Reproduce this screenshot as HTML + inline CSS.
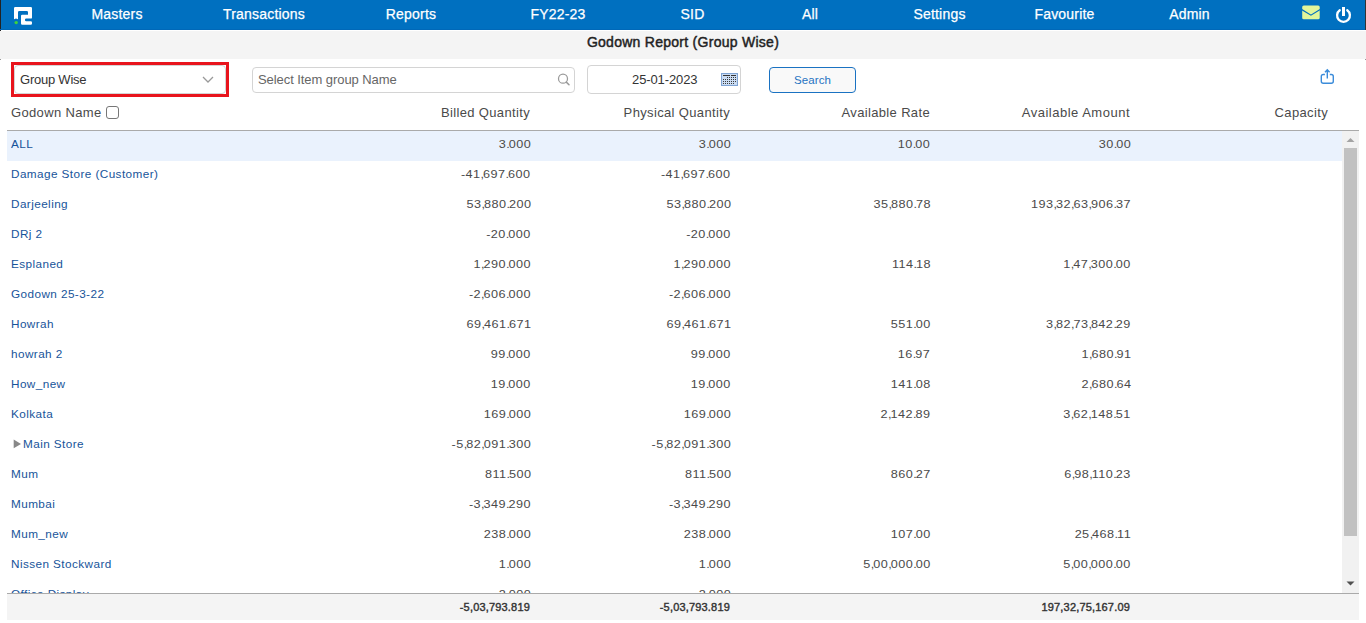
<!DOCTYPE html>
<html><head><meta charset="utf-8">
<style>
*{box-sizing:border-box;margin:0;padding:0}
html,body{width:1366px;height:623px;overflow:hidden;background:#fff;font-family:"Liberation Sans",sans-serif}
.abs{position:absolute}
#nav{position:absolute;left:0;top:0;width:1366px;height:30px;background:#0070c0}
#nav .edge{position:absolute;left:0;top:0;width:1px;height:31px;background:#222}
#nav .it{position:absolute;top:0;height:30px;line-height:29px;color:#fff;font-size:14px;letter-spacing:0.2px;-webkit-text-stroke:0.25px #fff;white-space:nowrap;transform:translateX(-50%)}
#band{position:absolute;left:0;top:31px;width:1366px;height:28px;background:#f4f4f4}
#title{position:absolute;left:0;top:31px;width:1366px;text-align:center;font-size:14px;font-weight:normal;color:#222;line-height:22px;letter-spacing:0.27px;-webkit-text-stroke:0.45px #222}
.inp{position:absolute;border:1px solid #d4d4d4;border-radius:4px;background:#fff}
.ph{position:absolute;font-size:13px;white-space:nowrap}
#red{position:absolute;left:11px;top:62px;width:218px;height:35px;border:3px solid #e8141c}
.hd{position:absolute;top:104px;font-size:13px;color:#4a4a4a;white-space:nowrap;letter-spacing:0.35px;line-height:18px}
.r{text-align:right}
#hline{position:absolute;left:7px;top:130px;width:1352px;height:1px;background:#aaa}
#body{position:absolute;left:7px;top:131px;width:1352px;height:462px;overflow:hidden}
.row{position:absolute;left:0;width:1335px;height:30px}
.row span{position:absolute;top:-2px;line-height:30px;font-size:12px;white-space:nowrap;letter-spacing:0.3px}
.row span.nm{left:4px;color:#17549a;font-size:11.3px;letter-spacing:0.4px;transform:scaleX(1.04);transform-origin:0 50%}
.row span.c1,.row span.c2,.row span.c3,.row span.c4{color:#4a4a4a;text-align:right;font-size:11px;letter-spacing:0.4px;transform:scaleX(1.15);transform-origin:100% 50%}
.row i{font-style:normal;letter-spacing:-0.9px}
.c1{right:811px}.c2{right:611px}.c3{right:411.5px}.c4{right:211px}
#sb{position:absolute;left:1342px;top:131px;width:17px;height:462px;background:#f1f1f1}
#thumb{position:absolute;left:1344px;top:148px;width:13px;height:388px;background:#c1c1c1}
#foot{position:absolute;left:7px;top:593px;width:1352px;height:27px;background:#f4f4f4;border-top:1px solid #aaa}
#foot span{position:absolute;top:0;line-height:26px;font-size:11px;font-weight:normal;color:#333;white-space:nowrap;letter-spacing:0.18px;-webkit-text-stroke:0.4px #333}
</style></head><body>
<div id="nav">
  <div class="edge"></div><div style="position:absolute;left:0;top:29px;width:1366px;height:1px;background:#0068b8"></div><div class="edge" style="left:1365px;height:30px;background:#333"></div>
  <svg class="abs" style="left:13px;top:6px" width="21" height="21" viewBox="13 6 21 21">
    <path fill="#fff" d="M15.2 7 H30.8 Q32 7 32 8.2 V17.4 Q32 18.6 30.8 18.6 H26.2 Q25 18.6 25 19.6 V20.2 Q25 21.2 26.2 21.2 H30.8 Q32 21.2 32 22.4 V23.5 Q32 24.7 30.8 24.7 H22.2 Q21 24.7 21 23.5 V16 Q21 14.8 22.2 14.8 H28 V12.2 Q28 11 26.8 11 H19.2 Q18 11 18 12.2 V19.3 L16 18.5 L14 19.3 V8.2 Q14 7 15.2 7 Z"/>
    <circle cx="16.2" cy="22.6" r="1.7" fill="#3fd43a"/>
  </svg>
  <div class="it" style="left:117px">Masters</div>
  <div class="it" style="left:264px">Transactions</div>
  <div class="it" style="left:411px">Reports</div>
  <div class="it" style="left:558px">FY22-23</div>
  <div class="it" style="left:692.5px">SID</div>
  <div class="it" style="left:810px">All</div>
  <div class="it" style="left:939.5px">Settings</div>
  <div class="it" style="left:1064.5px">Favourite</div>
  <div class="it" style="left:1189.5px">Admin</div>
  <svg class="abs" style="left:1302px;top:5px" width="18" height="15" viewBox="0 0 18 15">
    <rect x="0.2" y="0.5" width="17.5" height="13.8" rx="1.6" fill="#e2f69a"/>
    <path d="M-0.2 4.6 L8.95 10.2 L18.1 4.6" fill="none" stroke="#0070c0" stroke-width="1.15"/>
  </svg>
  <svg class="abs" style="left:1335px;top:6px" width="17" height="18" viewBox="0 0 17 18">
    <path d="M4.74 4.27 A6.40 6.40 0 1 0 12.26 4.27" fill="none" stroke="#fff" stroke-width="2.3" stroke-linecap="round"/>
    <rect x="7" y="1" width="3" height="9" fill="#fff"/>
  </svg>
</div>
<div id="band"></div>
<div class="abs" style="left:0;top:59px;width:1px;height:1px;background:#999"></div><div class="abs" style="left:1365px;top:59px;width:1px;height:1px;background:#999"></div>
<div id="title">Godown Report (Group Wise)</div>

<div id="red"></div>
<div class="inp" style="left:14px;top:65px;width:212px;height:29px"></div>
<div class="ph" style="left:20px;top:72px;color:#333;letter-spacing:-0.23px">Group Wise</div>
<svg class="abs" style="left:202px;top:76px" width="12" height="8" viewBox="0 0 12 8"><path d="M1 1 L6 6 L11 1" fill="none" stroke="#999" stroke-width="1.3"/></svg>

<div class="inp" style="left:252px;top:67px;width:323px;height:26px"></div>
<div class="ph" style="left:258px;top:72px;color:#666;letter-spacing:-0.07px">Select Item group Name</div>
<svg class="abs" style="left:556.5px;top:73.4px" width="14" height="13" viewBox="0 0 14 13"><circle cx="6" cy="5.7" r="4.5" fill="none" stroke="#9a9a9a" stroke-width="1.25"/><path d="M9.3 9.1 L12 11.8" stroke="#9a9a9a" stroke-width="1.5" stroke-linecap="round"/></svg>

<div class="inp" style="left:587px;top:65px;width:154px;height:29px"></div>
<div class="ph" style="left:632px;top:72px;color:#333;letter-spacing:-0.1px">25-01-2023</div>
<svg class="abs" style="left:721px;top:73px" width="17" height="13" viewBox="0 0 17 13" shape-rendering="crispEdges">
  <rect x="0" y="0" width="17" height="13" fill="#7fa3d3"/>
  <rect x="1" y="1" width="15" height="11" fill="#cadcf3"/>
  <rect x="2" y="2" width="7" height="1" fill="#333"/><rect x="10" y="2" width="5" height="1" fill="#333"/>
  <g fill="#3a3a3a"><rect x="6" y="4" width="1" height="1"/><rect x="8" y="4" width="1" height="1"/><rect x="10" y="4" width="1" height="1"/><rect x="12" y="4" width="1" height="1"/><rect x="14" y="4" width="1" height="1"/><rect x="2" y="6" width="1" height="1"/><rect x="4" y="6" width="1" height="1"/><rect x="6" y="6" width="1" height="1"/><rect x="8" y="6" width="1" height="1"/><rect x="10" y="6" width="1" height="1"/><rect x="12" y="6" width="1" height="1"/><rect x="14" y="6" width="1" height="1"/><rect x="2" y="8" width="1" height="1"/><rect x="4" y="8" width="1" height="1"/><rect x="6" y="8" width="1" height="1"/><rect x="8" y="8" width="1" height="1"/><rect x="10" y="8" width="1" height="1"/><rect x="12" y="8" width="1" height="1"/><rect x="14" y="8" width="1" height="1"/><rect x="2" y="10" width="1" height="1"/><rect x="4" y="10" width="1" height="1"/><rect x="6" y="10" width="1" height="1"/><rect x="8" y="10" width="1" height="1"/><rect x="10" y="10" width="1" height="1"/><rect x="12" y="10" width="1" height="1"/></g>
</svg>

<div class="abs" style="left:769px;top:67px;width:87px;height:26px;border:1.5px solid #1a72c2;border-radius:4px;background:#f9f9f9;color:#2673c2;font-size:11.5px;text-align:center;line-height:25px;letter-spacing:0.1px">Search</div>

<svg class="abs" style="left:1320px;top:68px" width="15" height="17" viewBox="0 0 15 17">
  <path d="M4.9 6.5 H3.3 Q1.3 6.5 1.3 8.5 V13.2 Q1.3 15.2 3.3 15.2 H11.3 Q13.3 15.2 13.3 13.2 V8.5 Q13.3 6.5 11.3 6.5 H9.8" fill="none" stroke="#3b8cda" stroke-width="1.4"/>
  <path d="M7.3 10.6 V1.9 M5 4.2 L7.3 1.7 L9.6 4.2" fill="none" stroke="#3b8cda" stroke-width="1.4"/>
</svg>

<div class="hd" style="left:11px">Godown Name</div>
<div class="abs" style="left:106px;top:106px;width:13px;height:13px;border:1px solid #777;border-radius:3px;background:#fff"></div>
<div class="hd r" style="right:836px">Billed Quantity</div>
<div class="hd r" style="right:636px">Physical Quantity</div>
<div class="hd r" style="right:436px">Available Rate</div>
<div class="hd r" style="right:236px;letter-spacing:0.5px">Available Amount</div>
<div class="hd r" style="right:38px">Capacity</div>
<div id="hline"></div>

<div id="body">
<div class="row" style="top:0px;background:#eaf2fd"><span class="nm">ALL</span><span class="c1">3<i>.</i>000</span><span class="c2">3<i>.</i>000</span><span class="c3">10<i>.</i>00</span><span class="c4">30<i>.</i>00</span></div>
<div class="row" style="top:30px"><span class="nm">Damage Store (Customer)</span><span class="c1">-41<i>,</i>697<i>.</i>600</span><span class="c2">-41<i>,</i>697<i>.</i>600</span></div>
<div class="row" style="top:60px"><span class="nm">Darjeeling</span><span class="c1">53<i>,</i>880<i>.</i>200</span><span class="c2">53<i>,</i>880<i>.</i>200</span><span class="c3">35<i>,</i>880<i>.</i>78</span><span class="c4">193<i>,</i>32<i>,</i>63<i>,</i>906<i>.</i>37</span></div>
<div class="row" style="top:90px"><span class="nm">DRj 2</span><span class="c1">-20<i>.</i>000</span><span class="c2">-20<i>.</i>000</span></div>
<div class="row" style="top:120px"><span class="nm">Esplaned</span><span class="c1">1<i>,</i>290<i>.</i>000</span><span class="c2">1<i>,</i>290<i>.</i>000</span><span class="c3">114<i>.</i>18</span><span class="c4">1<i>,</i>47<i>,</i>300<i>.</i>00</span></div>
<div class="row" style="top:150px"><span class="nm">Godown 25-3-22</span><span class="c1">-2<i>,</i>606<i>.</i>000</span><span class="c2">-2<i>,</i>606<i>.</i>000</span></div>
<div class="row" style="top:180px"><span class="nm">Howrah</span><span class="c1">69<i>,</i>461<i>.</i>671</span><span class="c2">69<i>,</i>461<i>.</i>671</span><span class="c3">551<i>.</i>00</span><span class="c4">3<i>,</i>82<i>,</i>73<i>,</i>842<i>.</i>29</span></div>
<div class="row" style="top:210px"><span class="nm">howrah 2</span><span class="c1">99<i>.</i>000</span><span class="c2">99<i>.</i>000</span><span class="c3">16<i>.</i>97</span><span class="c4">1<i>,</i>680<i>.</i>91</span></div>
<div class="row" style="top:240px"><span class="nm">How_new</span><span class="c1">19<i>.</i>000</span><span class="c2">19<i>.</i>000</span><span class="c3">141<i>.</i>08</span><span class="c4">2<i>,</i>680<i>.</i>64</span></div>
<div class="row" style="top:270px"><span class="nm">Kolkata</span><span class="c1">169<i>.</i>000</span><span class="c2">169<i>.</i>000</span><span class="c3">2<i>,</i>142<i>.</i>89</span><span class="c4">3<i>,</i>62<i>,</i>148<i>.</i>51</span></div>
<div class="row" style="top:300px"><span class="nm" style="left:16px">Main Store</span><svg style="position:absolute;left:5.5px;top:7.7px" width="9" height="10" viewBox="0 0 9 10"><path d="M0.7 0.6 L8 4.9 L0.7 9.2 Z" fill="#888"/></svg><span class="c1">-5<i>,</i>82<i>,</i>091<i>.</i>300</span><span class="c2">-5<i>,</i>82<i>,</i>091<i>.</i>300</span></div>
<div class="row" style="top:330px"><span class="nm">Mum</span><span class="c1">811<i>.</i>500</span><span class="c2">811<i>.</i>500</span><span class="c3">860<i>.</i>27</span><span class="c4">6<i>,</i>98<i>,</i>110<i>.</i>23</span></div>
<div class="row" style="top:360px"><span class="nm">Mumbai</span><span class="c1">-3<i>,</i>349<i>.</i>290</span><span class="c2">-3<i>,</i>349<i>.</i>290</span></div>
<div class="row" style="top:390px"><span class="nm">Mum_new</span><span class="c1">238<i>.</i>000</span><span class="c2">238<i>.</i>000</span><span class="c3">107<i>.</i>00</span><span class="c4">25<i>,</i>468<i>.</i>11</span></div>
<div class="row" style="top:420px"><span class="nm">Nissen Stockward</span><span class="c1">1<i>.</i>000</span><span class="c2">1<i>.</i>000</span><span class="c3">5<i>,</i>00<i>,</i>000<i>.</i>00</span><span class="c4">5<i>,</i>00<i>,</i>000<i>.</i>00</span></div>
<div class="row" style="top:450px"><span class="nm">Office Display</span><span class="c1">2<i>.</i>000</span><span class="c2">2<i>.</i>000</span></div>
</div>
<div id="sb"></div>
<div id="thumb"></div>
<svg class="abs" style="left:1346px;top:137px" width="9" height="6" viewBox="0 0 9 6"><path d="M0.5 5 L4.5 1 L8.5 5 Z" fill="#a3a3a3"/></svg>
<svg class="abs" style="left:1346px;top:581px" width="9" height="6" viewBox="0 0 9 6"><path d="M0.5 0.6 L4.5 4.6 L8.5 0.6 Z" fill="#505050"/></svg>

<div id="foot">
  <span style="right:829px">-5,03,793.819</span>
  <span style="right:629px">-5,03,793.819</span>
  <span style="right:229px">197,32,75,167.09</span>
</div>
</body></html>
